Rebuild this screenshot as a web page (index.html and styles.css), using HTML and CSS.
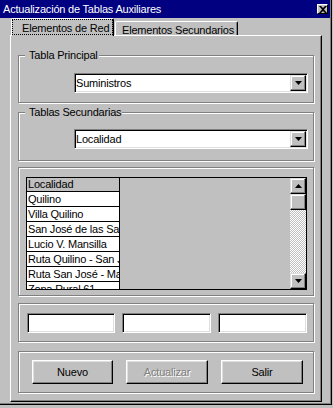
FILE: index.html
```html
<html>
    <head>
        <title>Actualización de Tablas Auxiliares</title>
        <meta charset="utf-8">
        <link rel="stylesheet" href="styles.css">
    </head>
    <body>
        <div class="window">
            <div class="titlebar">
                <span class="title">Actualización de Tablas Auxiliares</span>
                <span class="close"><svg width="8" height="7" viewBox="0 0 8 7"><path d="M0 0h2l2 2 2-2h2L5 3.5 8 7H6L4 5 2 7H0l3-3.5z" fill="#000"/></svg></span>
            </div>
            <div class="tabs">
                <div class="tab active"><span class="focus">Elementos de Red</span></div>
                <div class="tab">Elementos Secundarios</div>
            </div>
            <div class="panel">
                <div class="group g1">
                    <span class="legend">Tabla Principal</span>
                    <div class="combo c1">
                        <span class="combo-text">Suministros</span>
                        <span class="drop"><svg width="7" height="4" viewBox="0 0 7 4"><path d="M0 0h7L3.5 4z"/></svg></span>
                    </div>
                </div>
                <div class="group g2">
                    <span class="legend">Tablas Secundarias</span>
                    <div class="combo c2">
                        <span class="combo-text">Localidad</span>
                        <span class="drop"><svg width="7" height="4" viewBox="0 0 7 4"><path d="M0 0h7L3.5 4z"/></svg></span>
                    </div>
                </div>
                <div class="group g3">
                    <div class="grid">
                        <div class="col">
                            <div class="cell head">Localidad</div>
                            <div class="cell">Quilino</div>
                            <div class="cell">Villa Quilino</div>
                            <div class="cell">San José de las Salinas</div>
                            <div class="cell">Lucio V. Mansilla</div>
                            <div class="cell">Ruta Quilino - San José</div>
                            <div class="cell">Ruta San José - Mansilla</div>
                            <div class="cell">Zona Rural 61</div>
                        </div>
                        <div class="empty"></div>
                        <div class="scrollbar">
                            <div class="sb-btn"><svg width="7" height="4" viewBox="0 0 7 4"><path d="M3.5 0L7 4H0z"/></svg></div>
                            <div class="sb-btn"></div>
                            <div class="track"></div>
                            <div class="sb-btn"><svg width="7" height="4" viewBox="0 0 7 4"><path d="M0 0h7L3.5 4z"/></svg></div>
                        </div>
                    </div>
                </div>
                <div class="group g4">
                    <div class="fields">
                        <div class="field"></div>
                        <div class="field"></div>
                        <div class="field"></div>
                    </div>
                </div>
                <div class="group g5">
                    <div class="buttons">
                        <div class="btn">Nuevo</div>
                        <div class="btn disabled">Actualizar</div>
                        <div class="btn">Salir</div>
                    </div>
                </div>
            </div>
        </div>
    </body>
</html>
```
FILE: styles.css
```css
* {
    box-sizing: border-box;
}
body {
    margin: 0;
    background-color: #c0c0c0;
    font-family: "Liberation Sans", Arial, sans-serif;
    font-size: 11px;
    letter-spacing: -0.2px;
    color: #000;
}
.window {
    width: 332px;
    height: 405px;
    border-right: 1px solid #000;
    border-bottom: 1px solid #000;
    padding-right: 1px;
    box-shadow: inset -1px -1px 0 #808080;
}
.titlebar {
    height: 18px;
    background-color: #000080;
    color: #fff;
    display: flex;
    align-items: center;
    justify-content: space-between;
    padding: 0 2px 0 3px;
}
.title {
    line-height: 18px;
}
.close {
    width: 11px;
    height: 10px;
    background-color: #c0c0c0;
    border: 1px solid;
    border-color: #fff #000 #000 #fff;
    display: flex;
    align-items: center;
    justify-content: center;
}

/* tabs */
.tabs {
    display: flex;
    align-items: flex-end;
    height: 17px;
    padding-left: 11px;
}
.tab {
    height: 14px;
    margin-left: 1px;
    padding: 3px 3px 0 6px;
    line-height: 11px;
    white-space: nowrap;
    border: 1px solid;
    border-color: #fff #000 #000 #fff;
    border-bottom: none;
    border-radius: 2px 2px 0 0;
    box-shadow: inset -1px 0 0 #808080;
}
.tab.active {
    position: relative;
    z-index: 1;
    width: 103px;
    height: 18px;
    margin-left: 0;
    margin-bottom: -1px;
    padding: 0;
    background-color: #c0c0c0;
}
.focus {
    display: block;
    height: 16px;
    border: 1px dotted #000;
    padding: 2px 0 0 9px;
    line-height: 13px;
}
.panel {
    margin-left: 10px;
    width: 312px;
    height: 367px;
    border: 1px solid;
    border-color: #fff #000 #000 #fff;
    box-shadow: inset -1px -1px 0 #808080;
    padding: 0 5px 0 7px;
}

/* group boxes */
.group {
    position: relative;
    width: 296px;
    border: 1px solid #808080;
    box-shadow: 1px 1px 0 #fff, inset 1px 1px 0 #fff;
}
.g1 { margin-top: 19px; height: 48px; }
.g2 { margin-top: 9px; height: 49px; }
.g3 { margin-top: 6px; height: 129px; }
.g4 { margin-top: 7px; height: 39px; }
.g5 { margin-top: 9px; height: 42px; }
.legend {
    position: absolute;
    left: 6px;
    top: -7px;
    padding: 0 1px 0 4px;
    line-height: 13px;
    background-color: #c0c0c0;
}

/* combos */
.combo {
    display: flex;
    width: 234px;
    height: 20px;
    margin-left: 55px;
    padding: 1px;
    background-color: #fff;
    border: 1px solid;
    border-color: #808080 #fff #fff #808080;
    box-shadow: inset 1px 1px 0 #000, inset -1px -1px 0 #dfdfdf;
}
.c1 { margin-top: 17px; }
.c2 { margin-top: 16px; }
.combo-text {
    flex: 1;
    line-height: 16px;
}
.drop, .sb-btn {
    width: 16px;
    height: 16px;
    display: flex;
    align-items: center;
    justify-content: center;
    background-color: #c0c0c0;
    border: 1px solid;
    border-color: #dfdfdf #000 #000 #dfdfdf;
    box-shadow: inset -1px -1px 0 #808080, inset 1px 1px 0 #fff;
}

/* grid */
.grid {
    display: flex;
    width: 281px;
    height: 113px;
    margin: 9px 0 0 7px;
    border: 1px solid #000;
    overflow: hidden;
}
.col {
    width: 93px;
    border-right: 1px solid #000;
}
.cell {
    height: 15px;
    padding-left: 1px;
    line-height: 14px;
    white-space: nowrap;
    overflow: hidden;
    background-color: #fff;
    border-bottom: 1px solid #000;
}
.cell.head {
    height: 14px;
    line-height: 13px;
    background-color: #c0c0c0;
}
.empty {
    flex: 1;
}
.scrollbar {
    width: 16px;
    display: flex;
    flex-direction: column;
}
.track {
    flex: 1;
    background: repeating-conic-gradient(#c0c0c0 0 25%, #fff 0 50%) 0 0 / 2px 2px;
}

/* text fields */
.fields {
    display: grid;
    grid-template-columns: 88px 89px 89px;
    column-gap: 7px;
    margin: 9px 0 0 8px;
}
.field {
    height: 20px;
    background-color: #fff;
    border: 1px solid;
    border-color: #808080 #fff #fff #808080;
    box-shadow: inset 1px 1px 0 #000, inset -1px -1px 0 #dfdfdf;
}

/* buttons */
.buttons {
    display: grid;
    grid-template-columns: 81px 82px 82px;
    column-gap: 13px;
    margin: 8px 0 0 13px;
}
.btn {
    height: 24px;
    line-height: 22px;
    text-align: center;
    border: 1px solid;
    border-color: #fff #000 #000 #fff;
    box-shadow: inset -1px -1px 0 #808080, inset 1px 1px 0 #dfdfdf;
}
.btn.disabled {
    color: #808080;
    text-shadow: 1px 1px 0 #fff;
}
```
